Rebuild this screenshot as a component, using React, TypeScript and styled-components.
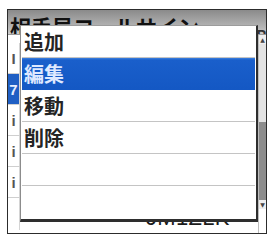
import React from "react";
import styled, { createGlobalStyle } from "styled-components";

const Global = createGlobalStyle`
  html, body { margin: 0; padding: 0; background: #ffffff; }
  body { width: 270px; height: 237px; overflow: hidden; }
`;

const Stage = styled.div`
  position: relative;
  width: 270px;
  height: 237px;
  padding: 9px 0 0 7px;
  box-sizing: border-box;
`;

const Frame = styled.div`
  width: 260px;
  height: 225px;
  border: 1px solid #2c2c2c;
  box-sizing: border-box;
  display: flex;
  flex-direction: column;
  overflow: hidden;
  background: #fff;
`;

const Header = styled.div`
  height: 24px;
  flex: none;
  display: flex;
  align-items: flex-start;
  justify-content: space-between;
  background: linear-gradient(#8a8a8a, #b4b4b4 70%, #cbcbcb);
  border-bottom: 1px solid #9a9a9a;
  overflow: hidden;
`;

const HeaderText = styled.span`
  font-family: "Noto Sans CJK JP", sans-serif;
  font-weight: 700;
  font-size: 21px;
  line-height: 22px;
  color: #111;
  padding: 5px 0 0 2px;
  white-space: nowrap;
`;

const HeaderTail = styled(HeaderText)`
  padding: 14px 0 0 0;
  font-size: 14px;
  font-family: "Liberation Sans", sans-serif;
  color: #333;
`;

const Body = styled.div`
  flex: 1;
  display: flex;
  min-height: 0;
`;

const List = styled.div`
  flex: 1;
  display: flex;
  flex-direction: column;
  padding-top: 8px;
  border-right: 1px solid #bdbdbd;
`;

const Row = styled.div<{ $tall?: boolean }>`
  height: ${(p) => (p.$tall ? "37px" : "31px")};
  flex: none;
  display: flex;
  align-items: ${(p) => (p.$tall ? "flex-end" : "center")};
  padding-bottom: ${(p) => (p.$tall ? "4px" : "0")};
  border-bottom: 1px solid ${(p) => (p.$tall ? "transparent" : "#cfcfcf")};
  box-sizing: border-box;
`;

const Mark = styled.div<{ $on?: boolean }>`
  width: 11px;
  align-self: stretch;
  display: flex;
  align-items: center;
  justify-content: center;
  background: ${(p) => (p.$on ? "#1f5fc4" : "transparent")};
  color: ${(p) => (p.$on ? "#e6eeff" : "#555")};
  font-family: "Liberation Sans", sans-serif;
  font-weight: 700;
  font-size: 15px;
  border-right: 1px solid #d4d4d4;
`;

const Call = styled.div`
  flex: 1;
  padding: 0 0 1px 126px;
  font-family: "Liberation Sans", sans-serif;
  font-size: 22px;
  line-height: 22px;
  color: #1a1a1a;
  letter-spacing: 0.3px;
`;

const Scroll = styled.div`
  width: 7px;
  height: 174px;
  flex: none;
  display: flex;
  flex-direction: column;
  background: #e3e3e3;
`;

const Arrow = styled.div`
  height: 9px;
  display: flex;
  align-items: center;
  justify-content: center;
  background: #eeeeee;
  color: #444;
  font-size: 6px;
  line-height: 6px;
  font-family: "DejaVu Sans", sans-serif;
`;

const Track = styled.div`
  flex: 1;
  display: flex;
  flex-direction: column;
  justify-content: flex-end;
`;

const Thumb = styled.div`
  height: 78px;
  background: #8d8d8d;
`;

const Menu = styled.div`
  position: absolute;
  left: 20px;
  top: 25px;
  width: 238px;
  height: 197px;
  box-sizing: border-box;
  background: #fff;
  border-left: 1px solid #8c8c8c;
  border-top: 1px solid #9c9c9c;
  border-right: 2px solid #2e2e2e;
  border-bottom: 3px solid #2e2e2e;
  padding: 0 1px 0 1px;
  display: flex;
  flex-direction: column;
`;

const Item = styled.div<{ $active?: boolean; $last?: boolean }>`
  height: 32px;
  flex: none;
  box-sizing: border-box;
  display: flex;
  align-items: center;
  padding-left: 2px;
  font-family: "Noto Sans CJK JP", sans-serif;
  font-weight: 700;
  font-size: 20px;
  color: ${(p) => (p.$active ? "#dfe9ff" : "#242424")};
  background: ${(p) => (p.$active ? "linear-gradient(#3a7fe0 0, #1a5fcb 2px, #1458c4)" : "#fff")};
  border-bottom: 1px solid ${(p) => (p.$last ? "transparent" : p.$active ? "#1458c4" : "#c4c4c4")};
`;

const rows = [
  { mark: "I", on: false },
  { mark: "7", on: true },
  { mark: "i", on: false },
  { mark: "i", on: false },
  { mark: "i", on: false },
];

const items = ["追加", "編集", "移動", "削除", "", ""];

export default function App() {
  return (
    <>
      <Global />
      <Stage>
        <Frame>
          <Header>
            <HeaderText>相手局コールサイン</HeaderText>
            <HeaderTail>P</HeaderTail>
          </Header>
          <Body>
            <List>
              {rows.map((r, i) => (
                <Row key={i}>
                  <Mark $on={r.on}>{r.mark}</Mark>
                  <Call />
                </Row>
              ))}
              <Row $tall>
                <Mark />
                <Call>JM1ZLK</Call>
              </Row>
            </List>
            <Scroll>
              <Arrow>▲</Arrow>
              <Track>
                <Thumb />
              </Track>
              <Arrow>▼</Arrow>
            </Scroll>
          </Body>
        </Frame>
        <Menu>
          {items.map((t, i) => (
            <Item key={i} $active={i === 1} $last={i === items.length - 1}>
              {t}
            </Item>
          ))}
        </Menu>
      </Stage>
    </>
  );
}
